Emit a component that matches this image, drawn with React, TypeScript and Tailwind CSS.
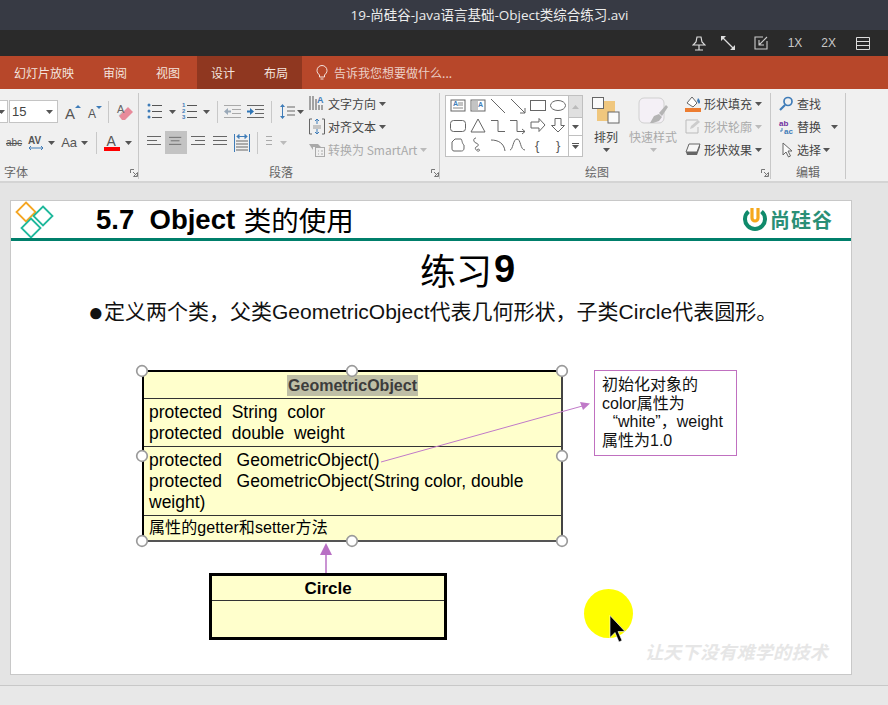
import React from "react";

const BLUE = "#3f7cb8";
const GR = "#666";

function Caret({ className = "", color = "#555" }: { className?: string; color?: string }) {
  return (
    <svg width="7" height="4" viewBox="0 0 7 4" className={`shrink-0 ${className}`}>
      <path d="M0 0h7L3.5 4z" fill={color} />
    </svg>
  );
}

function Lines({ rows, className = "", color = GR }: { rows: [number, number][]; className?: string; color?: string }) {
  return (
    <svg width="16" height="16" viewBox="0 0 16 16" className={`shrink-0 ${className}`}>
      {rows.map(([a, b], i) => (
        <rect key={i} x={a} y={1 + i * 4} width={b - a} height="1" fill={color} />
      ))}
    </svg>
  );
}

function BulletIcon({ num = false, className = "" }: { num?: boolean; className?: string }) {
  return (
    <svg width="15" height="17" viewBox="0 0 15 17" className={`shrink-0 overflow-visible ${className}`}>
      {[2, 8, 14].map((y, i) =>
        num ? (
          <text key={y} x="0" y={y + 2} fontSize="6" fontWeight="700" fill={BLUE} fontFamily="Liberation Sans">
            {i + 1}
          </text>
        ) : (
          <circle key={y} cx="2" cy={y} r="1.5" fill={BLUE} />
        )
      )}
      {[2, 8, 14].map((y) => (
        <rect key={y} x="5" y={y} width="10" height="1" fill="#555" />
      ))}
    </svg>
  );
}

function IndentIcon({ dir, faded, className = "" }: { dir: "l" | "r"; faded?: boolean; className?: string }) {
  const c = faded ? "#a9a9a9" : "#666";
  const b = faded ? "#9aa9b8" : "#2e75b6";
  return (
    <svg width="17" height="14" viewBox="0 0 17 14" className={`shrink-0 ${className}`}>
      <rect x="0" y="0" width="17" height="1" fill={c} />
      <rect x="8" y="4" width="9" height="1" fill={c} />
      <rect x="8" y="8" width="9" height="1" fill={c} />
      <rect x="0" y="12" width="17" height="1" fill={c} />
      {dir === "l" ? (
        <path d="M0 6.5L4 3v2.5h3v2H4V10z" fill={b} />
      ) : (
        <path d="M7 6.5L3 3v2.5H0v2h3V10z" fill={b} />
      )}
    </svg>
  );
}

function RowIcon({ children, w = 16, h = 16, className = "" }: { children: React.ReactNode; w?: number; h?: number; className?: string }) {
  return (
    <svg width={w} height={h} viewBox={`0 0 ${w} ${h}`} className={`shrink-0 overflow-visible ${className}`}>
      {children}
    </svg>
  );
}

const S = { fill: "none", stroke: "#666", strokeWidth: 1 };

const shapes: React.ReactNode[] = [
  <g key="a">
    <rect x="1" y="3" width="14" height="11" {...S} />
    <text x="3" y="9" fontSize="7" fill={BLUE} fontWeight="700" fontFamily="Liberation Sans">A</text>
    <path d="M8 6h5M8 8h5M3 11h10" {...S} stroke="#888" />
  </g>,
  <g key="b">
    <rect x="1" y="3" width="14" height="11" {...S} />
    <text x="8" y="10" fontSize="7" fill={BLUE} fontWeight="700" fontFamily="Liberation Sans">A</text>
    <path d="M3 4v9M5 4v9M7 4v9" {...S} stroke="#888" />
  </g>,
  <path key="c" d="M1 2l14 14" {...S} />,
  <path key="d" d="M1 2l14 14M15 11v5h-5" {...S} />,
  <rect key="e" x="0.5" y="3.5" width="15" height="10" {...S} />,
  <ellipse key="f" cx="8" cy="8.5" rx="7.5" ry="5" {...S} />,
  <rect key="g" x="0.5" y="3.5" width="15" height="11" rx="3" {...S} />,
  <path key="h" d="M8 2l7 13H1z" {...S} />,
  <path key="i" d="M1 3.5h7v11h7" {...S} />,
  <path key="j" d="M0 3.5h7v11h8M12 12l3 2.5-3 2.5" {...S} />,
  <path key="k" d="M1 5h8V1.5l6 6.5-6 6.5V11H1z" {...S} />,
  <path key="l" d="M5 1.5h6v7h3.5L8 15 1.5 8.500H5z" {...S} />,
  <path key="m" d="M2 5l3-3h6c1 0 1 5 3 6v3c0 3-2 3-3 3H4c-2 0-2-2-2-3z" {...S} />,
  <path key="n" d="M6 1c-3 0-3 4 0 5s3 3 0 4c-2 1 1 5 3 4s-1-3-2-1" {...S} />,
  <path key="o" d="M1 3c7 0 13 3 14 11" {...S} />,
  <path key="p" d="M0 13c3 0 3-11 7-11s3 11 8 11" {...S} />,
  <text key="q" x="5" y="13" fontSize="13" fill="#555" fontFamily="Liberation Sans">{"{"}</text>,
  <text key="r" x="6" y="13" fontSize="13" fill="#555" fontFamily="Liberation Sans">{"}"}</text>,
];

const CJK = "font-['Noto_Sans_CJK_SC','Noto_Sans',sans-serif]";
const ARIAL = "font-['Liberation_Sans','Noto_Sans_CJK_SC',sans-serif]";

function Launcher() {
  return (
    <svg width="8" height="8" viewBox="0 0 8 8" className="shrink-0">
      <path d="M0.5 4V0.5H4" fill="none" stroke="#777" />
      <path d="M3 3l3.500 3.500M7.500 3.500v4h-4z" fill="none" stroke="#777" />
    </svg>
  );
}

function GroupLabel({ text, pl, launcher }: { text: string; pl: number; launcher?: number }) {
  return (
    <div className="flex h-[17px] shrink-0 items-center pt-[2px] text-[12px] text-[#666]">
      <span style={{ marginLeft: pl }}>{text}</span>
      {launcher !== undefined && (
        <span className="flex pt-[3px]" style={{ marginLeft: launcher }}>
          <Launcher />
        </span>
      )}
    </div>
  );
}

function TextRow({ icon, label, faded, caret = true }: { icon: React.ReactNode; label: string; faded?: boolean; caret?: boolean }) {
  return (
    <div className={`flex h-[23px] items-center ${faded ? "text-[#aaa]" : "text-[#444]"}`}>
      {icon}
      <span className="ml-[3px] whitespace-nowrap text-[12px]">{label}</span>
      {caret && <Caret className="ml-[3px]" color={faded ? "#bbb" : "#555"} />}
    </div>
  );
}

function Ribbon() {
  return (
    <div className={`flex h-[94px] shrink-0 border-b-2 border-[#d4d4d4] bg-[#f0f0f0] pt-[4px] ${CJK}`}>
      {/* Font */}
      <div className="flex h-[86px] w-[139px] shrink-0 flex-col border-r border-[#c8c8c8]">
        <div className="h-[69px] shrink-0 pt-[7px]">
          <div className="flex h-[23px] items-center">
            <div className="flex h-[23px] w-[8px] items-center border-y border-r border-[#c4c4c4] bg-white">
              <Caret className="ml-[-2px]" />
            </div>
            <div className={`ml-[1px] flex h-[23px] w-[49px] items-center justify-between border border-[#c4c4c4] bg-white pl-[2px] pr-[4px] text-[13px] text-[#444] ${ARIAL}`}>
              15
              <Caret />
            </div>
            <RowIcon w={16} h={16} className="ml-[7px]">
              <text x="0" y="15" fontSize="15" fill="#555" fontFamily="Liberation Sans">A</text>
              <path d="M10 4l3-3 3 3z" fill={BLUE} />
            </RowIcon>
            <RowIcon w={14} h={14} className="ml-[7px]">
              <text x="0" y="13" fontSize="12" fill="#555" fontFamily="Liberation Sans">A</text>
              <path d="M8 1h6l-3 3z" fill={BLUE} />
            </RowIcon>
            <div className="ml-[6px] h-[22px] w-px bg-[#c8c8c8]" />
            <RowIcon w={16} h={18} className="ml-[8px]">
              <path d="M2 13l9-9 5 5-8 8H5z" fill="#e88a9a" />
              <path d="M2 13l4-5" stroke="#bbb" />
              <text x="0" y="10" fontSize="11" fill="#666" fontFamily="Liberation Sans">A</text>
            </RowIcon>
          </div>
          <div className="mt-[8px] flex h-[23px] items-center pl-[6px]">
            <span className={`text-[10px] text-[#555] line-through ${ARIAL}`}>abc</span>
            <RowIcon w={16} h={16} className="ml-[6px]">
              <text x="0" y="9" fontSize="10" fontWeight="700" fill="#555" fontFamily="Liberation Sans">AV</text>
              <path d="M1 13h14M3 11l-2 2 2 2M13 11l2 2-2 2" fill="none" stroke={BLUE} />
            </RowIcon>
            <Caret className="ml-[4px]" />
            <span className={`ml-[6px] text-[13px] text-[#555] ${ARIAL}`}>Aa</span>
            <Caret className="ml-[4px]" />
            <div className="ml-[8px] h-[22px] w-px bg-[#c8c8c8]" />
            <RowIcon w={16} h={17} className="ml-[7px]">
              <text x="2.500" y="12" fontSize="14" fill="#555" fontFamily="Liberation Sans">A</text>
              <rect x="0" y="13" width="16" height="4" fill="#f00" />
            </RowIcon>
            <Caret className="ml-[5px]" />
          </div>
        </div>
        <GroupLabel text="字体" pl={4} launcher={102} />
      </div>

      {/* Paragraph */}
      <div className="flex h-[86px] w-[301px] shrink-0 flex-col border-r border-[#c8c8c8]">
        <div className="flex h-[69px] shrink-0">
          <div className="w-[169px] shrink-0 pt-[7px]">
            <div className="flex h-[23px] items-center pl-[8px]">
              <BulletIcon />
              <Caret className="ml-[7px]" />
              <BulletIcon num className="ml-[6px]" />
              <Caret className="ml-[6px]" />
              <div className="ml-[7px] h-[22px] w-px bg-[#c8c8c8]" />
              <IndentIcon dir="l" faded className="ml-[6px]" />
              <IndentIcon dir="r" className="ml-[6px]" />
              <div className="ml-[7px] h-[22px] w-px bg-[#c8c8c8]" />
              <RowIcon w={15} h={17} className="ml-[8px]">
                <path d="M2.500 2v13" stroke={BLUE} />
                <path d="M0 4l2.500-3L5 4zM0 13l2.500 3L5 13z" fill={BLUE} />
                <path d="M7 4h8M7 8h8M7 12h8" stroke="#666" />
              </RowIcon>
              <Caret className="ml-[2px]" />
            </div>
            <div className="mt-[8px] flex h-[23px] items-center pl-[8px]">
              <Lines rows={[[0, 14], [0, 10], [0, 14]]} />
              <div className="ml-[2px] flex h-[23px] w-[22px] items-center justify-center bg-[#c3c3c3]">
                <Lines rows={[[0, 14], [2, 12], [0, 14]]} className="w-[14px]" />
              </div>
              <Lines rows={[[0, 14], [4, 14], [0, 14]]} className="ml-[4px]" />
              <Lines rows={[[0, 14], [0, 14], [0, 14]]} className="ml-[6px]" />
              <RowIcon w={16} h={18} className="ml-[5px]">
                <path d="M0.500 0v18M15.500 0v18" stroke={BLUE} />
                <path d="M3 2.500h10M3 2.500l2-2v4zM13 2.500l-2-2v4z" stroke={BLUE} fill={BLUE} />
                <path d="M2 7h12M2 10h12M2 13h12M2 16h12" stroke="#666" />
              </RowIcon>
              <div className="ml-[7px] h-[22px] w-px bg-[#c8c8c8]" />
              <Lines rows={[[0, 6], [0, 6], [0, 6]]} color="#aaa" className="ml-[8px]" />
              <Caret className="ml-[-2px]" color="#bbb" />
            </div>
          </div>
          <div className="mt-[-1px] pl-[1px]">
            <TextRow
              label="文字方向"
              icon={
                <RowIcon w={16} h={17}>
                  <path d="M1 1v14M4 1v14M7 4v11" stroke="#555" />
                  <text x="8" y="8" fontSize="9" fontWeight="700" fill={BLUE} fontFamily="Liberation Sans">A</text>
                  <path d="M10 10v5M13 10v5" stroke="#555" />
                </RowIcon>
              }
            />
            <TextRow
              label="对齐文本"
              icon={
                <RowIcon w={16} h={17}>
                  <path d="M3 1H0.500v15H3M13 1h2.500v15H13" fill="none" stroke="#666" />
                  <path d="M8 1v5M8 11v5M6 3l2-2 2 2M6 14l2 2 2-2" fill="none" stroke={BLUE} />
                  <path d="M4 8h8M4 10h8" stroke="#999" />
                </RowIcon>
              }
            />
            <TextRow
              faded
              label="转换为 SmartArt"
              icon={
                <RowIcon w={16} h={17}>
                  <path d="M0 3h9l3 3H4v3z" fill="#aaa" />
                  <rect x="6.500" y="6.500" width="9" height="9" fill="none" stroke="#aaa" />
                  <path d="M9 10h1M12 10h2M9 13h1M12 13h2" stroke="#aaa" />
                </RowIcon>
              }
            />
          </div>
        </div>
        <GroupLabel text="段落" pl={130} launcher={138} />
      </div>

      {/* Drawing */}
      <div className="flex h-[86px] w-[331px] shrink-0 flex-col border-r border-[#c8c8c8]">
        <div className="flex h-[69px] shrink-0 pl-[5px] pt-[2px]">
          <div className="flex h-[62px] w-[138px] shrink-0 border border-[#c0c0c0] bg-white">
            <div className="grid w-[122px] shrink-0 grid-cols-[repeat(6,20px)] grid-rows-[repeat(3,20px)] pl-[2px]">
              {shapes.map((s, i) => (
                <div key={i} className="flex items-center justify-center">
                  <RowIcon w={16} h={18}>{s}</RowIcon>
                </div>
              ))}
            </div>
            <div className="flex w-[14px] flex-col border-l border-[#c0c0c0]">
              <div className="flex h-[21px] items-center justify-center bg-[#e0e0e0]">
                <svg width="7" height="4" viewBox="0 0 7 4"><path d="M0 4h7L3.500 0z" fill="#bbb" /></svg>
              </div>
              <div className="flex h-[19px] items-center justify-center border-y border-[#c0c0c0]"><Caret /></div>
              <div className="flex flex-1 flex-col items-center justify-center gap-[1px]">
                <div className="h-px w-[7px] bg-[#555]" />
                <Caret />
              </div>
            </div>
          </div>
          <div className="ml-[3px] flex w-[40px] shrink-0 flex-col items-center pt-[2px] text-[12px] text-[#444]">
            <svg width="28" height="28" viewBox="0 0 28 28" className="mb-[3px]">
              <rect x="5" y="4" width="18" height="20" fill="#f0c77e" />
              <rect x="0.500" y="0.500" width="11" height="11" fill="#fafafa" stroke="#666" />
              <rect x="16" y="15" width="11" height="11" fill="#fafafa" stroke="#666" />
            </svg>
            <span className="leading-[18px]">排列</span>
            <Caret className="mt-[2px]" />
          </div>
          <div className="ml-px flex w-[52px] shrink-0 flex-col items-center pt-[2px] text-[12px] text-[#aaa]">
            <svg width="30" height="30" viewBox="0 0 30 30" className="mb-px">
              <rect x="1" y="1" width="25" height="25" rx="5" fill="#f4f0f6" stroke="#d0d0d0" />
              <path d="M12 26l4-7 5-2 3 3-3 4-6 2zM21 16l7-8 2 2-6 9z" fill="#b4b4b4" />
            </svg>
            <span className="whitespace-nowrap leading-[18px]">快速样式</span>
            <Caret className="mt-[2px]" color="#bbb" />
          </div>
          <div className="ml-[6px] mt-[-3px] shrink-0">
            <TextRow
              label="形状填充"
              icon={
                <RowIcon w={16} h={17}>
                  <path d="M2 8l5-6 5 6-4 4z" fill="#fff" stroke="#666" />
                  <path d="M13 3c2 2 3 4 1 6l-2-3z" fill={BLUE} />
                  <rect x="0" y="13" width="16" height="4" fill="#ed7d31" />
                </RowIcon>
              }
            />
            <TextRow
              faded
              label="形状轮廓"
              icon={
                <RowIcon w={16} h={17}>
                  <path d="M13 2H1v13h12v-6" fill="none" stroke="#bbb" />
                  <path d="M5 11l1-3 7-6 2 2-7 6z" fill="#ccc" />
                </RowIcon>
              }
            />
            <TextRow
              label="形状效果"
              icon={
                <RowIcon w={16} h={17}>
                  <path d="M1 11l3-8h11l-3 8z" fill="#f6f6f6" stroke="#666" />
                  <path d="M1 11h11l3-8v3l-3 8H2z" fill="#666" />
                </RowIcon>
              }
            />
          </div>
        </div>
        <GroupLabel text="绘图" pl={145} launcher={152} />
      </div>

      {/* Editing */}
      <div className="flex h-[86px] w-[75px] shrink-0 flex-col border-r border-[#c8c8c8]">
        <div className="mt-[-1px] h-[70px] shrink-0 pl-[8px] text-[12px] text-[#444]">
          <div className="flex h-[23px] items-center">
            <RowIcon w={14} h={15}>
              <circle cx="9" cy="5.500" r="4" fill="none" stroke={BLUE} strokeWidth="1.700" />
              <path d="M6 9l-5 5" stroke={BLUE} strokeWidth="2.200" />
            </RowIcon>
            <span className="ml-[4px]">查找</span>
          </div>
          <div className="flex h-[23px] items-center">
            <RowIcon w={16} h={16}>
              <text x="0" y="7" fontSize="8" fontWeight="700" fill="#7030a0" fontFamily="Liberation Sans">ab</text>
              <text x="5" y="15" fontSize="8" fontWeight="700" fill={BLUE} fontFamily="Liberation Sans">ac</text>
              <path d="M3 9v3h-2" fill="none" stroke={BLUE} />
            </RowIcon>
            <span className="ml-[2px]">替换</span>
            <Caret className="ml-[10px]" />
          </div>
          <div className="flex h-[23px] items-center">
            <RowIcon w={12} h={16} className="ml-[3px]">
              <path d="M1 1v12l3-3 2.500 5 2-1-2.500-5h4z" fill="#fafafa" stroke="#666" />
            </RowIcon>
            <span className="ml-[3px]">选择</span>
            <Caret className="ml-[2px]" />
          </div>
        </div>
        <GroupLabel text="编辑" pl={25} />
      </div>
    </div>
  );
}

const Handle = ({ x, y }: { x: number; y: number }) => (
  <circle cx={x} cy={y} r="5.300" fill="#fff" stroke="#9a9a9a" strokeWidth="1.700" />
);

function Slide() {
  return (
    <div className={`relative h-[475px] w-[842px] border border-[#c8c8c8] bg-white ${ARIAL}`}>
      <div className="flex h-[40px] border-b-[3px] border-[#007f6b]">
        <svg width="42" height="37" viewBox="0 0 42 37" className="ml-[4px] shrink-0">
          <path d="M11 1.500l9.500 9.500L11 20.500 1.500 11z" fill="none" stroke="#f5a623" strokeWidth="1.800" />
          <path d="M28 5.500l9.500 9.500-9.500 9.500L18.500 15z" fill="none" stroke="#1fb89c" strokeWidth="1.800" />
          <path d="M16 17.500l9.500 9.500-9.500 9.500L6.500 27z" fill="none" stroke="#1fb89c" strokeWidth="1.800" />
        </svg>
        <div className="ml-[39px] flex items-center text-[27.500px] font-bold leading-none text-black">
          <span className="whitespace-pre">5.7  Object </span>
          <span className={`ml-px font-normal ${CJK}`}>类的使用</span>
        </div>
        <div className="ml-auto mr-[18px] flex items-center gap-[3px]">
          <svg width="24" height="25" viewBox="0 0 24 25" className="shrink-0">
            <path d="M5.500 4.500A10 10 0 1 0 18.500 4.500" fill="none" stroke="#0f8a6b" strokeWidth="4" />
            <path d="M9 1v10a3 3 0 0 0 6 0V1" fill="none" stroke="#f5a81c" strokeWidth="3.200" />
          </svg>
          <span className={`text-[20px] font-bold leading-none tracking-[1px] text-[#2a8f76] ${CJK}`}>尚硅谷</span>
        </div>
      </div>
      <div className="ml-[409px] mt-[3px] flex h-[50px] items-center text-[36px] font-bold leading-none text-black">
        <span className={`font-normal ${CJK}`}>练习</span>
        <span className="ml-[2px] text-[38px]">9</span>
      </div>
      <div className="ml-[77px] mt-[5px] flex items-center text-[21px] leading-[26px] text-[#111]">
        <span className="w-[16px] text-[26px] leading-[26px]">●</span>
        <span className={`whitespace-nowrap ${ARIAL}`}>定义两个类，父类GeometricObject代表几何形状，子类Circle代表圆形。</span>
      </div>

      {/* GeometricObject class node */}
      <div className="absolute left-[131px] top-[169px] flex h-[172px] w-[421px] flex-col border-[2px] border-black border-b-[#555] border-r-[#444] bg-[#ffffcc] text-[17.500px] leading-[21px] text-black">
        <div className="flex h-[27px] shrink-0 items-center justify-center border-b border-[#333]">
          <span className="bg-[#bfbfa6] px-[1px] text-[16px] font-bold leading-[21px] text-[#3c3c3c]">GeometricObject</span>
        </div>
        <div className="h-[48px] shrink-0 whitespace-pre border-b border-[#333] pl-[5px] pt-[3px]">
          <div>protected  String  color</div>
          <div>protected  double  weight</div>
        </div>
        <div className="h-[69px] shrink-0 border-b border-[#333] pl-[5px] pt-[3px]">
          <div className="whitespace-pre">protected   GeometricObject()</div>
          <div>protected&nbsp;&nbsp; GeometricObject(String color, double weight)</div>
        </div>
        <div className="flex-1 pl-[5px] text-[16px] leading-[24px] tracking-[0.1px]">属性的getter和setter方法</div>
      </div>

      {/* Circle class node */}
      <div className="absolute left-[198px] top-[372px] flex h-[67px] w-[238px] flex-col border-[3px] border-black bg-[#ffffcc]">
        <div className="flex h-[25px] shrink-0 items-center justify-center border-b border-[#333] pt-px text-[17px] font-bold text-black">Circle</div>
      </div>

      {/* Note */}
      <div className={`absolute left-[583px] top-[169px] h-[86px] w-[143px] border border-[#c070c0] bg-white pl-[7px] pt-[5px] text-[16px] leading-[18.700px] text-[#111] ${ARIAL}`}>
        初始化对象的
        <br />
        color属性为
        <br />
        <span className="inline-block w-[16px] text-right">“</span>white”，weight
        <br />
        属性为1.0
      </div>

      {/* Connectors, handles, pointer */}
      <svg width="840" height="473" viewBox="0 0 840 473" className="pointer-events-none absolute left-0 top-0">
        <path d="M370 261L575 204" stroke="#c07ac8" fill="none" />
        <path d="M579 202.500l-10-1.500 3 8z" fill="#c07ac8" />
        <path d="M315 372v-20" stroke="#b86fc4" strokeWidth="1.500" />
        <path d="M315 342l6 12h-12z" fill="#b86fc4" />
        <Handle x={131} y={170} />
        <Handle x={341} y={170} />
        <Handle x={551} y={170} />
        <Handle x={131} y={255} />
        <Handle x={551} y={255} />
        <Handle x={131} y={340} />
        <Handle x={341} y={340} />
        <Handle x={551} y={340} />
        <circle cx="597.500" cy="412.500" r="24.500" fill="#ffff00" />
        <path d="M599 414.500v22l5-5 4 9.500 3-1.500-4-9h7z" fill="#000" stroke="#fff" strokeWidth="0.600" />
      </svg>

      <div className={`absolute left-[634px] top-[439px] whitespace-nowrap text-[18px] font-bold italic leading-[22px] tracking-[0.3px] text-[#e6e6e6] ${CJK}`}>
        让天下没有难学的技术
      </div>
    </div>
  );
}

export default function App() {
  return (
    <div className={`flex h-[705px] w-[888px] flex-col overflow-hidden bg-[#e4e4e4] ${CJK}`}>
      <div className="flex h-[30px] shrink-0 items-center justify-center bg-[#373a44] pl-[91px] text-[13.500px] text-[#ececec]">
        <span className="font-['Open_Sans','Noto_Sans_CJK_SC',sans-serif]">19-尚硅谷-Java语言基础-Object类综合练习.avi</span>
      </div>
      <div className="flex h-[26px] shrink-0 items-center justify-end bg-[#2a2a2a] pr-[18px] text-[#c8c8c8]">
        <svg width="14" height="16" viewBox="0 0 14 16" className="shrink-0">
          <path d="M5 2h4l1 5 3 3H1l3-3zM7 10v5M3 15h8" fill="none" stroke="#ddd" strokeWidth="1.200" />
        </svg>
        <svg width="14" height="14" viewBox="0 0 14 14" className="ml-[15px] shrink-0">
          <path d="M1 1l12 12" stroke="#ddd" strokeWidth="1.200" />
          <path d="M0 0h5L0 5zM14 14H9l5-5z" fill="#ddd" />
        </svg>
        <svg width="14" height="14" viewBox="0 0 14 14" className="ml-[19px] shrink-0">
          <path d="M9 1H1v12h12V5M13 1L5 9M5 4v5h5" fill="none" stroke="#ccc" strokeWidth="1.100" />
        </svg>
        <span className={`ml-[20px] text-[12px] ${ARIAL}`}>1X</span>
        <span className={`ml-[19px] text-[12px] ${ARIAL}`}>2X</span>
        <svg width="14" height="13" viewBox="0 0 14 13" className="ml-[20px] shrink-0">
          <path d="M0.500 0.500h13v12h-13zM0.500 4.500h13M0.500 8.500h13" fill="none" stroke="#ddd" />
        </svg>
      </div>
      <div className="flex h-[33px] shrink-0 bg-[#b7472a] text-[12px] text-[#f3e3de]">
        <div className="flex items-center px-[14px]">幻灯片放映</div>
        <div className="ml-px flex items-center px-[14px]">审阅</div>
        <div className="ml-px flex items-center px-[14px]">视图</div>
        <div className="ml-[3px] flex bg-[#8f3720]">
          <div className="flex items-center px-[14px]">设计</div>
          <div className="ml-px flex items-center px-[14px]">布局</div>
        </div>
        <div className="ml-[14px] flex items-center text-[#eccfc6]">
          <svg width="12" height="15" viewBox="0 0 12 15" className="shrink-0">
            <path d="M3.500 10C2 8.500 1 7.500 1 5.500a5 5 0 0 1 10 0c0 2-1 3-2.500 4.500v2h-5zM4.500 14h3" fill="none" stroke="#f3e3de" />
          </svg>
          <span className="ml-[6px]">告诉我您想要做什么...</span>
        </div>
      </div>
      <Ribbon />
      <div className="flex-1 pl-[10px] pt-[17px]">
        <Slide />
        <div className="-ml-[10px] mt-[10px] h-[20px] border-t border-[#c8c8c8] bg-[#e8e8e8]" />
      </div>
    </div>
  );
}
